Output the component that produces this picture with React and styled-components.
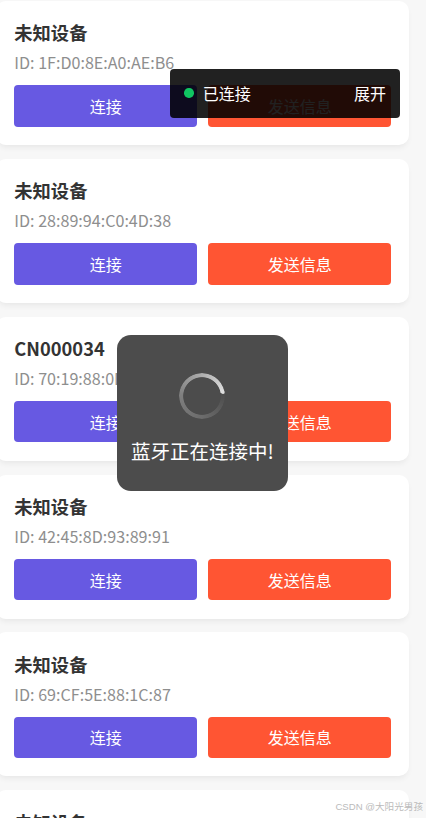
import React from "react"
import styled, { createGlobalStyle } from "styled-components"

const devices = [
  { name: "未知设备", id: "1F:D0:8E:A0:AE:B6" },
  { name: "未知设备", id: "28:89:94:C0:4D:38" },
  { name: "CN000034", id: "70:19:88:0D:4C:21" },
  { name: "未知设备", id: "42:45:8D:93:89:91" },
  { name: "未知设备", id: "69:CF:5E:88:1C:87" },
  // only the top of this card is in view
  { name: "未知设备" },
]

const DeviceCard = ({ name, id }) => {
  return (
    <Card>
      <Name>{name}</Name>
      {id && (
        <>
          <DeviceId>ID: {id}</DeviceId>
          <Actions>
            <Button $color="#6759e2">连接</Button>
            <Button $color="#ff5533">发送信息</Button>
          </Actions>
        </>
      )}
    </Card>
  )
}

const App = () => {
  return (
    <Page>
      <GlobalStyle />
      <List>
        {devices.map((device, index) => (
          <DeviceCard key={index} name={device.name} id={device.id} />
        ))}
      </List>
      <StatusBar>
        <Dot />
        <StatusText>已连接</StatusText>
        <span>展开</span>
      </StatusBar>
      <Loading>
        <Spinner>
          <SpinnerCap />
        </Spinner>
        <LoadingText>蓝牙正在连接中!</LoadingText>
      </Loading>
      <Watermark>CSDN @大阳光男孩</Watermark>
    </Page>
  )
}

export default App

const GlobalStyle = createGlobalStyle`
  body {
    margin: 0;
    overflow: hidden;
    font-family: "Noto Sans CJK SC", sans-serif;
  }
  * {
    box-sizing: border-box;
  }
`
const Page = styled.div`
  position: relative;
  width: 426px;
  height: 818px;
  overflow: hidden;
  background: #f7f7f7;
`
const List = styled.div`
  display: flex;
  flex-direction: column;
  gap: 13.88px;
  width: 413px;
  padding-top: 0.9px;
  margin-left: -4px;
`
const Card = styled.div`
  flex: none;
  height: 144px;
  padding: 16.6px 18px 0 18.3px;
  border-radius: 10px;
  background: #fff;
  box-shadow: 0 4px 6px -2px rgba(0, 0, 0, 0.07);
`
const Name = styled.div`
  height: 31px;
  line-height: 30px;
  font-size: 18.3px;
  font-weight: 700;
  color: #333;
`
const DeviceId = styled.div`
  height: 28px;
  line-height: 28px;
  font-size: 16.1px;
  color: #8e8e8e;
`
const Actions = styled.div`
  display: flex;
  gap: 11.3px;
  margin-top: 8.6px;
`
const Button = styled.button`
  flex: 1;
  height: 41.6px;
  padding: 0;
  border: 0;
  border-radius: 4px;
  background: ${({ $color }) => $color};
  color: #fff;
  font-family: inherit;
  font-size: 16px;
`
const StatusBar = styled.div`
  position: absolute;
  top: 68.5px;
  left: 170.3px;
  display: flex;
  align-items: center;
  width: 229.7px;
  height: 49px;
  padding: 0 14px;
  border-radius: 4px;
  background: rgba(0, 0, 0, 0.87);
  color: #fff;
  font-size: 16px;
`
const Dot = styled.span`
  width: 9.4px;
  height: 9.4px;
  border-radius: 50%;
  background: #10c562;
`
const StatusText = styled.span`
  flex: 1;
  margin-left: 9px;
`
const Loading = styled.div`
  position: absolute;
  top: 335px;
  left: 117px;
  display: flex;
  flex-direction: column;
  align-items: center;
  width: 171px;
  height: 156px;
  padding-top: 38px;
  border-radius: 14px;
  background: #4c4c4c;
`
const Spinner = styled.div`
  position: relative;
  width: 46px;
  height: 46px;
  margin-right: 1.4px;
  border-radius: 50%;
  background: conic-gradient(
    from 80deg,
    #4c4c4c 0deg,
    #6c6c6c 100deg,
    #7e7e7e 190deg,
    #a8a8a8 270deg,
    #dedede 360deg
  );
  mask: radial-gradient(circle, transparent 18.4px, #000 19.2px);
`
const SpinnerCap = styled.span`
  position: absolute;
  top: 16.5px;
  right: 0.3px;
  width: 4px;
  height: 4px;
  border-radius: 50%;
  background: #dedede;
`
const LoadingText = styled.div`
  margin-top: 16.6px;
  line-height: 30px;
  font-size: 19.5px;
  color: #fff;
  white-space: nowrap;
`
const Watermark = styled.div`
  position: absolute;
  right: 3px;
  bottom: 3px;
  line-height: 16px;
  font-family: "Liberation Sans", "Noto Sans CJK SC", sans-serif;
  font-size: 9.6px;
  color: #bbb;
  white-space: nowrap;
`
